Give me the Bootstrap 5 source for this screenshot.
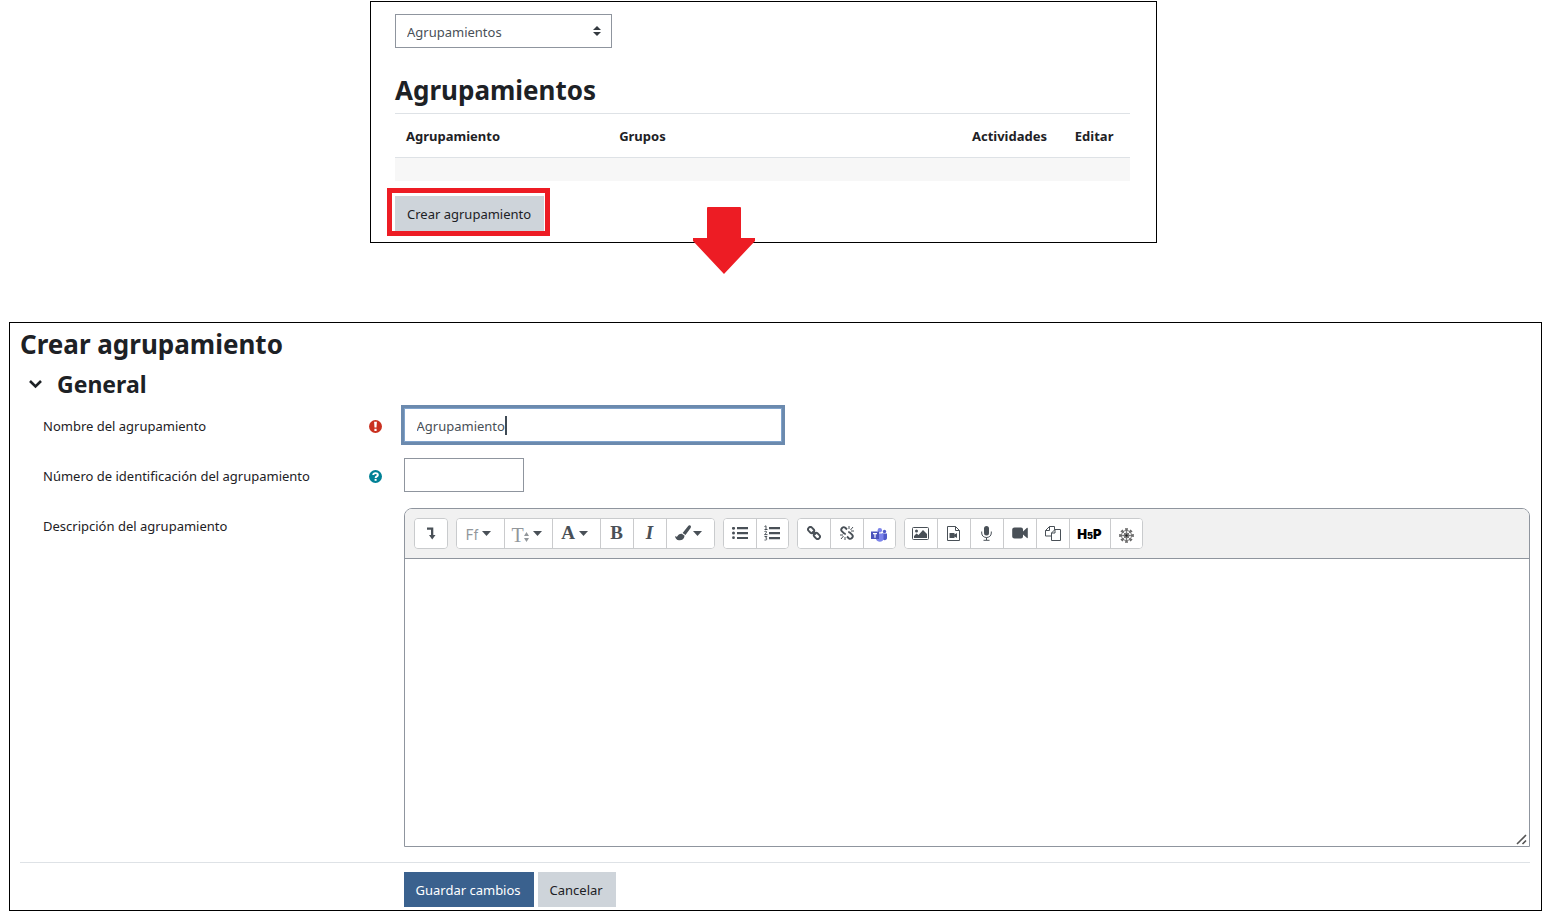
<!DOCTYPE html>
<html lang="es">
<head>
<meta charset="utf-8">
<meta name="viewport" content="width=device-width, initial-scale=1">
<title>Crear agrupamiento</title>
<link href="https://cdn.jsdelivr.net/npm/bootstrap@5.3.0/dist/css/bootstrap.min.css" rel="stylesheet">
<style>
  body { font: 13px/20px "Noto Sans", "Open Sans", sans-serif; color: #1d2125; background: #fff; padding: 1px 15px 0 9px; }
  h2 { font-size: 26px; line-height: 32px; font-weight: 700; margin: 0; }
  h3 { font-size: 23px; line-height: 28px; font-weight: 700; margin: 0; }
  .panel { border: 1px solid #000; }
  .overview-wrap { padding-right: 24px; margin-bottom: 79px; }
  .overview { max-width: 787px; padding: 12px 26px 6px 24px; }
  .form-select, .form-control { height: 34px; border: 1px solid #8f959e; border-radius: 0; font-size: 13px; line-height: 20px; color: #495057; padding: 7px 12px 5px; }
  .form-select { width: 217px; padding: 7px 11px 5px;
    background-image: url("data:image/svg+xml,%3Csvg xmlns='http://www.w3.org/2000/svg' viewBox='0 0 8 10'%3E%3Cpath fill='%23343a40' d='M4 0 0 4h8zM4 10 0 6h8z'/%3E%3C/svg%3E");
    background-size: 8px 10px; background-position: right 10px top 11px; }
  .overview h2 { margin: 26px 0 7px; }
  .groupings { margin: 0; table-layout: fixed; border-top: 1px solid #dee2e6; --bs-table-bg: transparent; }
  .groupings th { padding: 12px 11px 11px; font-size: 13px; font-weight: 700; color: #1d2125; border-bottom: 1px solid #dee2e6; }
  .groupings td { height: 23px; padding: 0; border: 0; background: #f7f7f7; }
  .w-name { width: 29%; } .w-groups { width: 48%; } .w-act { width: 14%; }
  .highlight { width: max-content; border: 5px solid #ed1c24; padding: 3px 1px 0 3px; margin: 7px 0 0 -8px; }
  .btn { border: 0; border-radius: 0; font-size: 13px; line-height: 20px; padding: 8px 13px 7px 12px; }
  .btn-grey { background: #ced4da; color: #1d2125; }
  .btn-save { background: #3a618e; color: #fff; }
  .down-arrow { left: 45%; bottom: -32px; transform: translateX(-50%); }
  .editing { padding: 5px 11px 3px 10px; }
  .section-head { gap: 14px; margin: 10px 0 10px 8px; }
  .fields { padding-left: 8px; }
  .field { margin-bottom: 16px; }
  .field-label { padding: 8px 22px 0 15px; }
  .name-wrap { width: 378px; }
  .name-wrap .form-control { border-color: #7fa2cb; box-shadow: 0 0 0 3px #6b8aae; }
  .caret-bar { left: 101px; top: 8px; width: 2px; height: 19px; background: #3f4a55; }
  .id-input { width: 120px; }
  .editor { border: 1px solid #8f959e; border-radius: 8px 8px 0 0; overflow: hidden; }
  .tools { background: #f1f1f1; border-bottom: 1px solid #8f959e; padding: 9px; gap: 8px; }
  .tool-group { border: 1px solid #c9cbcd; border-radius: 4px; background: #fff; height: 31px; overflow: hidden; }
  .tool { width: 33px; border: 0; border-left: 1px solid #cacbcd; background: #fff; padding: 0; color: #495057; display: flex; align-items: center; justify-content: center; gap: 5px; }
  .tool:first-child { border-left: 0; width: 32px; }
  .tool:last-child { width: 32px; }
  .tool.drop { width: 48px; gap: 4px; padding-right: 3px; }
  .tool.drop:first-child { width: 47px; }
  .tool.drop:last-child { gap: 2px; width: 48px; }
  .tool.brand { width: 41px; }
  .serif { font: 700 19px/20px "Liberation Serif", serif; }
  .faint { color: #92979b; }
  .ff { font: 400 14px/20px Roboto, sans-serif; padding-top: 4px; }
  .tt { font: 400 20px/20px "Liberation Serif", serif; padding-top: 4px; }
  .logo-text { font: 900 13px/20px Inter, sans-serif; color: #000; padding-top: 4px; }
  .logo-text small { font-size: 9px; }
  .writing { height: 287px; border: 0; border-radius: 0; resize: none; display: block; }
  .grip { right: 1px; bottom: 1px; }
  .divider { border-top: 1px solid #dee2e6; margin: -1px 0 9px; }
  .actions { gap: 4px; }
</style>
</head>
<body>
<svg width="0" height="0" class="position-absolute" aria-hidden="true">
  <symbol id="dd" viewBox="0 0 9 5"><path fill="#495057" d="M0 0h9L4.500 5z"/></symbol>
</svg>

<div class="overview-wrap">
  <section class="panel overview mx-auto position-relative">
    <select class="form-select" aria-label="Vista"><option>Agrupamientos</option></select>
    <h2>Agrupamientos</h2>
    <table class="table groupings">
      <thead><tr><th class="w-name">Agrupamiento</th><th class="w-groups">Grupos</th><th class="w-act">Actividades</th><th>Editar</th></tr></thead>
      <tbody><tr><td></td><td></td><td></td><td></td></tr></tbody>
    </table>
    <div class="highlight"><button type="button" class="btn btn-grey d-block">Crear agrupamiento</button></div>
    <svg class="down-arrow position-absolute" width="62" height="67" viewBox="0 0 62 67"><path fill="#ed1c24" d="M15 0h32q1 0 1 1v30h14v3L31 67 0 34v-3h14V1q0-1 1-1z"/></svg>
  </section>
</div>

<form class="panel editing">
  <h2>Crear agrupamiento</h2>
  <div class="section-head d-flex align-items-center">
    <svg width="15" height="10" viewBox="0 0 15 10" fill="none" stroke="#1d2125" stroke-width="2.600"><path d="m2 2 5.500 5.500L13 2"/></svg>
    <h3>General</h3>
  </div>
  <div class="fields">
    <div class="row g-0 field">
      <div class="col-3 field-label d-flex justify-content-between">
        <label for="name">Nombre del agrupamiento</label>
        <svg class="mt-1" width="13" height="13" viewBox="0 0 13 13"><circle cx="6.500" cy="6.500" r="6.500" fill="#ca3120"/><path fill="#fff" d="M5.100 1.800h2.800l-.4 5.800h-2zM5.400 8.700h2.200v2.200H5.400z"/></svg>
      </div>
      <div class="col-9"><div class="name-wrap position-relative">
        <input id="name" class="form-control" type="text" value="Agrupamiento">
        <span class="caret-bar position-absolute"></span>
      </div></div>
    </div>
    <div class="row g-0 field">
      <div class="col-3 field-label d-flex justify-content-between">
        <label for="idn">Número de identificación del agrupamiento</label>
        <svg class="mt-1" width="13" height="13" viewBox="0 0 13 13"><circle cx="6.500" cy="6.500" r="6.500" fill="#008196"/><path fill="none" stroke="#fff" stroke-width="1.900" d="M4.200 5c.2-2.600 4.800-2.400 4.700 0 0 1.500-2.200 1.300-2.300 3"/><path fill="#fff" d="M5.600 8.900h2v1.900h-2z"/></svg>
      </div>
      <div class="col-9"><input id="idn" class="form-control id-input" type="text"></div>
    </div>
    <div class="row g-0 field">
      <div class="col-3 field-label"><label for="desc">Descripción del agrupamiento</label></div>
      <div class="col-9"><div class="editor position-relative">
        <div class="tools d-flex flex-wrap">
          <div class="tool-group d-flex">
            <button type="button" class="tool" aria-label="Más"><svg width="10" height="13" viewBox="0 0 10 13"><path fill="#495057" d="M1 .500h6.300v7.500h2.200L6.200 12.500 3 8h2V2.700H1z"/></svg></button>
          </div>
          <div class="tool-group d-flex">
            <button type="button" class="tool drop"><span class="ff faint">Ff</span><svg width="9" height="5"><use href="#dd"/></svg></button>
            <button type="button" class="tool drop" aria-label="Tamaño"><span class="d-flex align-items-center"><span class="tt faint">T</span><svg class="mt-2" width="5" height="10" viewBox="0 0 5 10"><path fill="#92979b" d="M0 4h5L2.500 0zM0 6h5L2.500 10z"/></svg></span><svg width="9" height="5"><use href="#dd"/></svg></button>
            <button type="button" class="tool drop"><span class="serif">A</span><svg width="9" height="5"><use href="#dd"/></svg></button>
            <button type="button" class="tool"><span class="serif">B</span></button>
            <button type="button" class="tool"><span class="serif fst-italic">I</span></button>
            <button type="button" class="tool drop" aria-label="Resaltar"><svg width="16" height="16" viewBox="0 0 16 16"><path fill="#495057" d="M15.300.5c.9.600.800 1.500.3 2.400L10.500 10 7.600 8 13 1.200c.6-.8 1.500-1.200 2.300-.7zM6.800 8.800l2.800 2c-.4 3.400-2.800 4.800-5.600 4.500-2.200-.2-3.700-1.700-4-4.300 1.300 1 2 .8 2.400.2.800-1.400 2.200-2.600 4.400-2.400z"/></svg><svg width="9" height="5"><use href="#dd"/></svg></button>
          </div>
          <div class="tool-group d-flex">
            <button type="button" class="tool" aria-label="Lista"><svg width="16" height="12" viewBox="0 0 16 12"><path fill="#495057" d="M5 0h11v2.300H5zm0 5h11v2.300H5zm0 5h11v2H5z"/><circle cx="1.500" cy="1.300" r="1.500" fill="#495057"/><circle cx="1.500" cy="6.100" r="1.500" fill="#495057"/><circle cx="1.500" cy="10.700" r="1.400" fill="#495057"/></svg></button>
            <button type="button" class="tool" aria-label="Lista numerada"><svg width="16" height="16" viewBox="0 0 16 16"><path fill="#495057" d="M5 2h11v2.200H5zm0 5h11v2.200H5zm0 5h11v2.200H5z"/><path fill="none" stroke="#495057" d="M.5 1.500 2 .8V4M.5 4.500h3M.5 6.500c2.800-1 2.500 1 0 3.100h3M.5 11.500h2.400l-1.200 1.600c2 .2 1.500 2.300-1.200 1.900"/></svg></button>
          </div>
          <div class="tool-group d-flex">
            <button type="button" class="tool" aria-label="Enlace"><svg width="14" height="14" viewBox="0 0 14 14" fill="none" stroke="#495057" stroke-width="1.900"><rect x="-3.300" y="-2.300" width="6.600" height="4.600" rx="2.200" transform="translate(4.100 4.100) rotate(45)"/><rect x="-3.300" y="-2.300" width="6.600" height="4.600" rx="2.200" transform="translate(9.900 9.900) rotate(45)"/><path d="m5.300 5.300 3.400 3.400"/></svg></button>
            <button type="button" class="tool" aria-label="Quitar enlace"><svg width="14" height="14" viewBox="0 0 14 14" fill="none" stroke="#495057" stroke-width="1.900"><path d="M7 3.500 5.300 1.800C3.200-.1 0 3 1.800 5.200l2 2c.6.600 1.200.7 2 .6M7 10.500l1.700 1.700c2.100 1.900 5.300-1.200 3.500-3.400l-2-2c-.6-.6-1.200-.7-2-.6"/><path stroke-width="1" d="M9 3V0m1.500 4L13 1m-2 4h3M5 11v3m-1.500-4L1 13m2-4H0"/></svg></button>
            <button type="button" class="tool" aria-label="Teams"><svg class="mt-1" width="16" height="14" viewBox="0 0 16 14"><circle cx="13.500" cy="3.500" r="1.700" fill="#5059c9"/><circle cx="8.800" cy="2.300" r="2.200" fill="#7b83eb"/><path fill="#5059c9" d="M11 5.500h5V10c0 2-2.500 2.800-4 1.500z"/><path fill="#7b83eb" d="M5 5.500h7.500v5c0 4-6.500 4.500-7.500.5z"/><path fill="#4b53bc" d="M0 3.500h8V11H0z"/><path fill="#fff" d="M2 5h4v1.200H4.600v3.500H3.400V6.200H2z"/></svg></button>
          </div>
          <div class="tool-group d-flex">
            <button type="button" class="tool" aria-label="Imagen"><svg width="17" height="13" viewBox="0 0 17 13"><rect x=".5" y=".5" width="16" height="12" rx="1" fill="none" stroke="#495057"/><circle cx="4.500" cy="4" r="1.500" fill="#495057"/><path fill="#495057" d="M2 11V9l2.500-2.500L6.500 8 11 3l4 4v4z"/></svg></button>
            <button type="button" class="tool" aria-label="Multimedia"><svg width="13" height="15" viewBox="0 0 13 15"><path fill="none" stroke="#495057" d="M.5.500h8l4 4v10H.5zM8.500.5v4h4"/><path fill="#495057" d="M2.500 7h5v1.600L10 7v5L7.500 10.400V12h-5z"/></svg></button>
            <button type="button" class="tool" aria-label="Audio"><svg width="11" height="15" viewBox="0 0 11 15"><rect x="3" width="5" height="9.500" rx="2.500" fill="#495057"/><path fill="none" stroke="#495057" d="M.7 5.500V7c0 6 9.600 6 9.600 0V5.500M5.500 11.500V14M2.500 14.300h6"/></svg></button>
            <button type="button" class="tool" aria-label="Vídeo"><svg width="16" height="12" viewBox="0 0 16 12"><path fill="#495057" d="M2.500.500H9q2 0 2 2v2L15 .8q.8-.3.800.700v9q0 1-.8.500L11 7.500v2q0 2-2 2H2.500q-2.300 0-2.300-2v-7q0-2 2.300-2z"/></svg></button>
            <button type="button" class="tool" aria-label="Archivos"><svg width="16" height="15" viewBox="0 0 16 15" fill="#fff" stroke="#495057"><path d="M4.500.5h5v9.500h-9V4.500zM4.500.5v4h-4"/><path d="M10 3.500h5.500v11h-9V7zM10 3.500V7H6.500"/></svg></button>
            <button type="button" class="tool brand"><span class="logo-text">H<small>5</small>P</span></button>
            <button type="button" class="tool" aria-label="Ecuación"><svg class="mt-1" width="15" height="15" viewBox="0 0 15 15" fill="none" stroke="#666"><circle cx="7.500" cy="7.500" r="5"/><circle cx="7.500" cy="7.500" r="2.500"/><path stroke-width=".8" d="M7.500 1v13M1 7.500h13M2.900 2.900l9.200 9.200M12.100 2.900l-9.200 9.200"/><path stroke-width="1.600" d="M6 1h3M6 14h3M1 6v3m13-3v3M2 4l2-2m7 0 2 2M2 11l2 2m9-2-2 2"/><circle cx="7.500" cy="7.500" r="1.200" fill="#222" stroke="none"/></svg></button>
          </div>
        </div>
        <textarea id="desc" class="form-control writing"></textarea>
        <svg class="grip position-absolute" width="12" height="11" viewBox="0 0 12 11"><path stroke="#555" stroke-width="1.600" d="m1 10 9-9M6.500 10 10 6.500"/></svg>
      </div></div>
    </div>
  </div>
  <div class="divider"></div>
  <div class="fields"><div class="row g-0"><div class="col-9 offset-3 d-flex actions">
    <button type="submit" class="btn btn-save">Guardar cambios</button>
    <button type="button" class="btn btn-grey">Cancelar</button>
  </div></div></div>
</form>
<script src="https://cdn.jsdelivr.net/npm/bootstrap@5.3.0/dist/js/bootstrap.bundle.min.js"></script>
</body>
</html>
